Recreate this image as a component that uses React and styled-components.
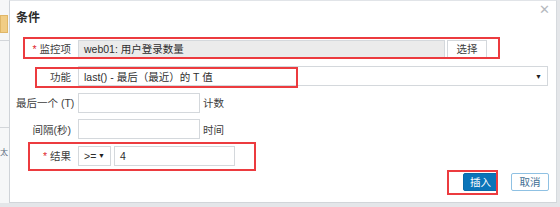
import styled, { createGlobalStyle } from "styled-components";

const GlobalStyle = createGlobalStyle`
  html, body {
    margin: 0;
    padding: 0;
    background: #e9ebee;
  }
  * {
    box-sizing: border-box;
  }
`;

const FONT = `"Liberation Sans", Arial, "Noto Sans CJK SC", sans-serif`;

const Page = styled.div`
  width: 560px;
  height: 207px;
  display: flex;
  overflow: hidden;
  font-family: ${FONT};
  background: #e4e6e9;
`;

const Backdrop = styled.div`
  width: 9px;
  height: 203px;
  background: #f6f7f8;
  display: flex;
  flex-direction: column;
  overflow: hidden;
`;

const BackTab = styled.div`
  margin-top: 15px;
  height: 18px;
  width: 8px;
  background: #f1cd85;
  border: 1px solid #e0b768;
`;

const BackLine = styled.div`
  margin-top: ${(p) => p.gap}px;
  height: 1px;
  background: #d3d6da;
`;

const BackText = styled.div`
  margin-top: 20px;
  font-size: 8px;
  line-height: 10px;
  color: #5a6b7c;
`;

const Dialog = styled.div`
  position: relative;
  width: 548px;
  height: 203px;
  background: #fff;
  border-left: 1px solid #cfd3d8;
  border-right: 1px solid #d6dade;
  border-top: 1px solid #e1e4e8;
  border-bottom: 1px solid #d1d5d9;
  padding: 10px 0 0 6px;
  color: #3c3c3c;
`;

const Title = styled.div`
  font-size: 12px;
  font-weight: bold;
  color: #2b2b2b;
  height: 14px;
  line-height: 14px;
`;

const Close = styled.span`
  position: absolute;
  top: 1px;
  right: 6px;
  font-size: 13px;
  color: #b5b9be;
`;

const Form = styled.div`
  margin-top: 14px;
  display: flex;
  flex-direction: column;
`;

const Row = styled.div`
  position: relative;
  display: flex;
  align-items: center;
  height: ${(p) => p.h || 20}px;
  margin-bottom: ${(p) => p.mb ?? 6.5}px;
`;

const Label = styled.div`
  width: 55px;
  text-align: right;
  font-size: 10.5px;
  color: #3d3d3d;
  margin-right: 7px;
  white-space: nowrap;
`;

const Star = styled.span`
  color: #e0282e;
  margin-right: 3px;
`;

const Field = styled.div`
  height: ${(p) => p.h || 20}px;
  width: ${(p) => p.w}px;
  border: 1px solid #d4d8dc;
  background: ${(p) => (p.readOnly ? "#ebebeb" : "#fff")};
  font-size: 10.5px;
  color: #2e2e2e;
  display: flex;
  align-items: center;
  justify-content: space-between;
  padding: 0 5px;
  margin-right: ${(p) => p.mr || 0}px;
`;

const Arrow = styled.span`
  font-size: 7px;
  color: #1f1f1f;
`;

const SelectBtn = styled.div`
  height: 18px;
  width: 40px;
  border: 1px solid #d4d8dc;
  background: #fff;
  font-size: 10.5px;
  color: #3d3d3d;
  display: flex;
  align-items: center;
  justify-content: center;
  margin-left: 2px;
`;

const Suffix = styled.span`
  font-size: 10.5px;
  color: #3d3d3d;
  margin-left: 3px;
`;

const Highlight = styled.div`
  position: absolute;
  left: ${(p) => p.left}px;
  width: ${(p) => p.width}px;
  top: ${(p) => p.top}px;
  height: ${(p) => p.height}px;
  border: 2px solid #ec3b3f;
  pointer-events: none;
`;

const Footer = styled.div`
  position: relative;
  margin-top: 7px;
  display: flex;
  justify-content: flex-end;
  gap: 13px;
  padding-right: 7px;
`;

const Button = styled.div`
  height: 18px;
  width: ${(p) => p.w}px;
  font-size: 10.5px;
  display: flex;
  align-items: center;
  justify-content: center;
  background: ${(p) => (p.primary ? "#0a74b9" : "#fff")};
  color: ${(p) => (p.primary ? "#fff" : "#3f6f94")};
  border: 1px solid ${(p) => (p.primary ? "#0a6aa8" : "#8fc1e3")};
  border-radius: 2px;
`;

export default function App() {
  return (
    <>
      <GlobalStyle />
      <Page>
        <Backdrop>
          <BackTab />
          <BackLine gap={7} />
          <BackLine gap={86} />
          <BackText>太</BackText>
        </Backdrop>
        <Dialog>
          <Title>条件</Title>
          <Close>✕</Close>
          <Form>
            <Row h={19} mb={8}>
              <Label>
                <Star>*</Star>监控项
              </Label>
              <Field w={367} h={18} readOnly>
                web01: 用户登录数量
              </Field>
              <SelectBtn>选择</SelectBtn>
              <Highlight left={7} width={477} top={-2} height={22} />
            </Row>
            <Row>
              <Label>功能</Label>
              <Field w={470}>
                <span>last() - 最后（最近）的 T 值</span>
                <Arrow>▼</Arrow>
              </Field>
              <Highlight left={19} width={263} top={1} height={21} />
            </Row>
            <Row>
              <Label>最后一个 (T)</Label>
              <Field w={122} />
              <Suffix>计数</Suffix>
            </Row>
            <Row>
              <Label>间隔(秒)</Label>
              <Field w={122} />
              <Suffix>时间</Suffix>
            </Row>
            <Row mb={0}>
              <Label>
                <Star>*</Star>结果
              </Label>
              <Field w={33} mr={3}>
                <span>&gt;=</span>
                <Arrow>▼</Arrow>
              </Field>
              <Field w={121}>4</Field>
              <Highlight left={12} width={228} top={-4} height={29} />
            </Row>
          </Form>
          <Footer>
            <Button primary w={35}>
              插入
            </Button>
            <Button w={38}>取消</Button>
            <Highlight left={431} width={51} top={-3} height={25} />
          </Footer>
        </Dialog>
      </Page>
    </>
  );
}
